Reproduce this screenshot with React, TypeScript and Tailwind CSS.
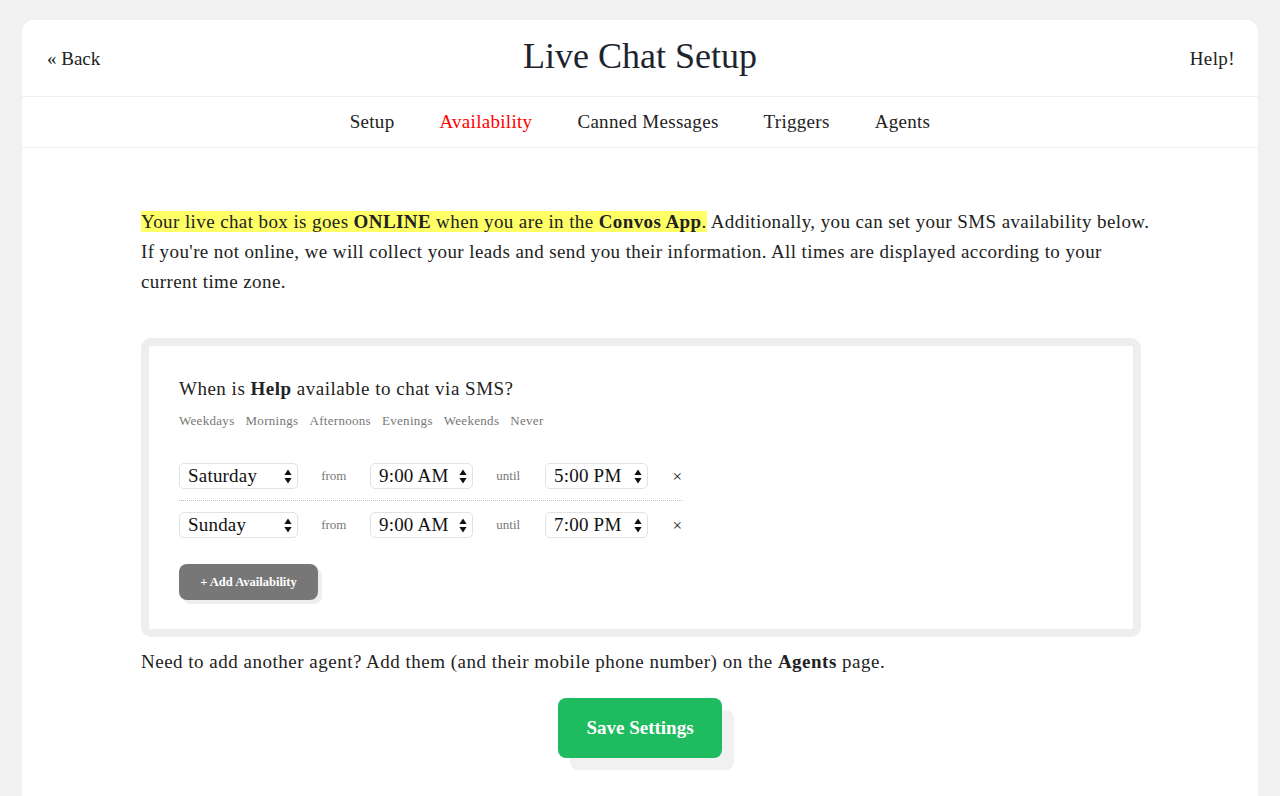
import React from "react";

const serif = { fontFamily: '"Liberation Serif", "DejaVu Serif", serif' };

function Arrows() {
  return (
    <svg width="8" height="15" viewBox="0 0 8 15" className="shrink-0">
      <path d="M4 0.5 L7.6 6 L0.4 6 Z" fill="#111" />
      <path d="M4 14.5 L7.6 9 L0.4 9 Z" fill="#111" />
    </svg>
  );
}

function Select({ value, width }: { value: string; width: string }) {
  return (
    <div
      className={`${width} h-[26px] flex items-center justify-between pl-[8px] pr-[5px] border border-[#e2e2e2] rounded-[5px] bg-white text-[19px] tracking-[0.2px] text-[#111] leading-none`}
    >
      <span className="-mt-[2px]">{value}</span>
      <Arrows />
    </div>
  );
}

function Row({ day, from, until, last }: { day: string; from: string; until: string; last?: boolean }) {
  return (
    <div
      className={`w-[503px] flex items-center gap-[23px] ${last ? "pt-[11px]" : "pb-[11px] border-b border-dotted border-[#bbb]"}`}
    >
      <Select value={day} width="w-[120px]" />
      <span className="text-[13px] text-[#777] w-[26px]">from</span>
      <Select value={from} width="w-[104px]" />
      <span className="text-[13px] text-[#777] w-[26px]">until</span>
      <Select value={until} width="w-[104px]" />
      <span className="text-[17px] text-[#222] ml-px leading-none">×</span>
    </div>
  );
}

export default function App() {
  const navItems = ["Setup", "Availability", "Canned Messages", "Triggers", "Agents"];
  const presets = ["Weekdays", "Mornings", "Afternoons", "Evenings", "Weekends", "Never"];
  return (
    <div className="min-h-[796px] bg-[#f1f1f1] px-[22px] pt-[20px] text-[#222]" style={serif}>
      <div className="bg-white rounded-t-[12px] min-h-[776px]">
        <div className="h-[76px] grid grid-cols-3 items-center px-[25px]">
          <div className="text-[19px] pt-[2px]">« Back</div>
          <div className="text-center text-[36px] text-[#1d2430] -mt-[4px]">Live Chat Setup</div>
          <div className="text-right text-[19px] tracking-[0.4px] pt-[2px] -mr-[2px]">Help!</div>
        </div>
        <div className="h-[52px] border-t border-b border-[#f0f0f0] flex items-center justify-center gap-[45px] text-[19px] tracking-[0.3px]">
          {navItems.map((n) => (
            <span key={n} className={n === "Availability" ? "text-[#ff0000]" : "text-[#222]"}>
              {n}
            </span>
          ))}
        </div>
        <div className="px-[119px] pt-[59px]">
          <p className="text-[19px] tracking-[0.4px] leading-[30px] w-[1040px] whitespace-nowrap">
            <span className="bg-[#ffff66]">
              Your live chat box is goes <b>ONLINE</b> when you are in the <b>Convos App</b>.
            </span>{" "}
            Additionally, you can set your SMS availability below.
            <br />
            If you're not online, we will collect your leads and send you their information. All times are displayed according to your
            <br />
            current time zone.
          </p>
          <div className="mt-[41px] w-[1000px] border-[8px] border-[#eeeeee] rounded-[10px] bg-white pl-[30px] pt-[31px] pb-[29px]">
            <div className="text-[19px] tracking-[0.5px] leading-[24px]">
              When is <b>Help</b> available to chat via SMS?
            </div>
            <div className="mt-[12px] flex gap-[11px] text-[13px] tracking-[0.3px] leading-[16px] text-[#777]">
              {presets.map((p) => (
                <span key={p}>{p}</span>
              ))}
            </div>
            <div className="mt-[34px]">
              <Row day="Saturday" from="9:00 AM" until="5:00 PM" />
              <Row day="Sunday" from="9:00 AM" until="7:00 PM" last />
            </div>
            <button className="mt-[26px] w-[139px] h-[36px] rounded-[8px] bg-[#777777] text-white text-[12.5px] font-bold shadow-[4px_4px_0_#eeeeee]">
              + Add Availability
            </button>
          </div>
          <p className="mt-[13px] text-[19px] tracking-[0.5px] leading-[24px]">
            Need to add another agent? Add them (and their mobile phone number) on the <b>Agents</b> page.
          </p>
          <div className="flex justify-center mt-[24px]">
            <button className="w-[164px] h-[60px] rounded-[8px] bg-[#1fbb60] text-white text-[19px] font-bold shadow-[12px_12px_0_#f1f1f1]">
              Save Settings
            </button>
          </div>
        </div>
      </div>
    </div>
  );
}
